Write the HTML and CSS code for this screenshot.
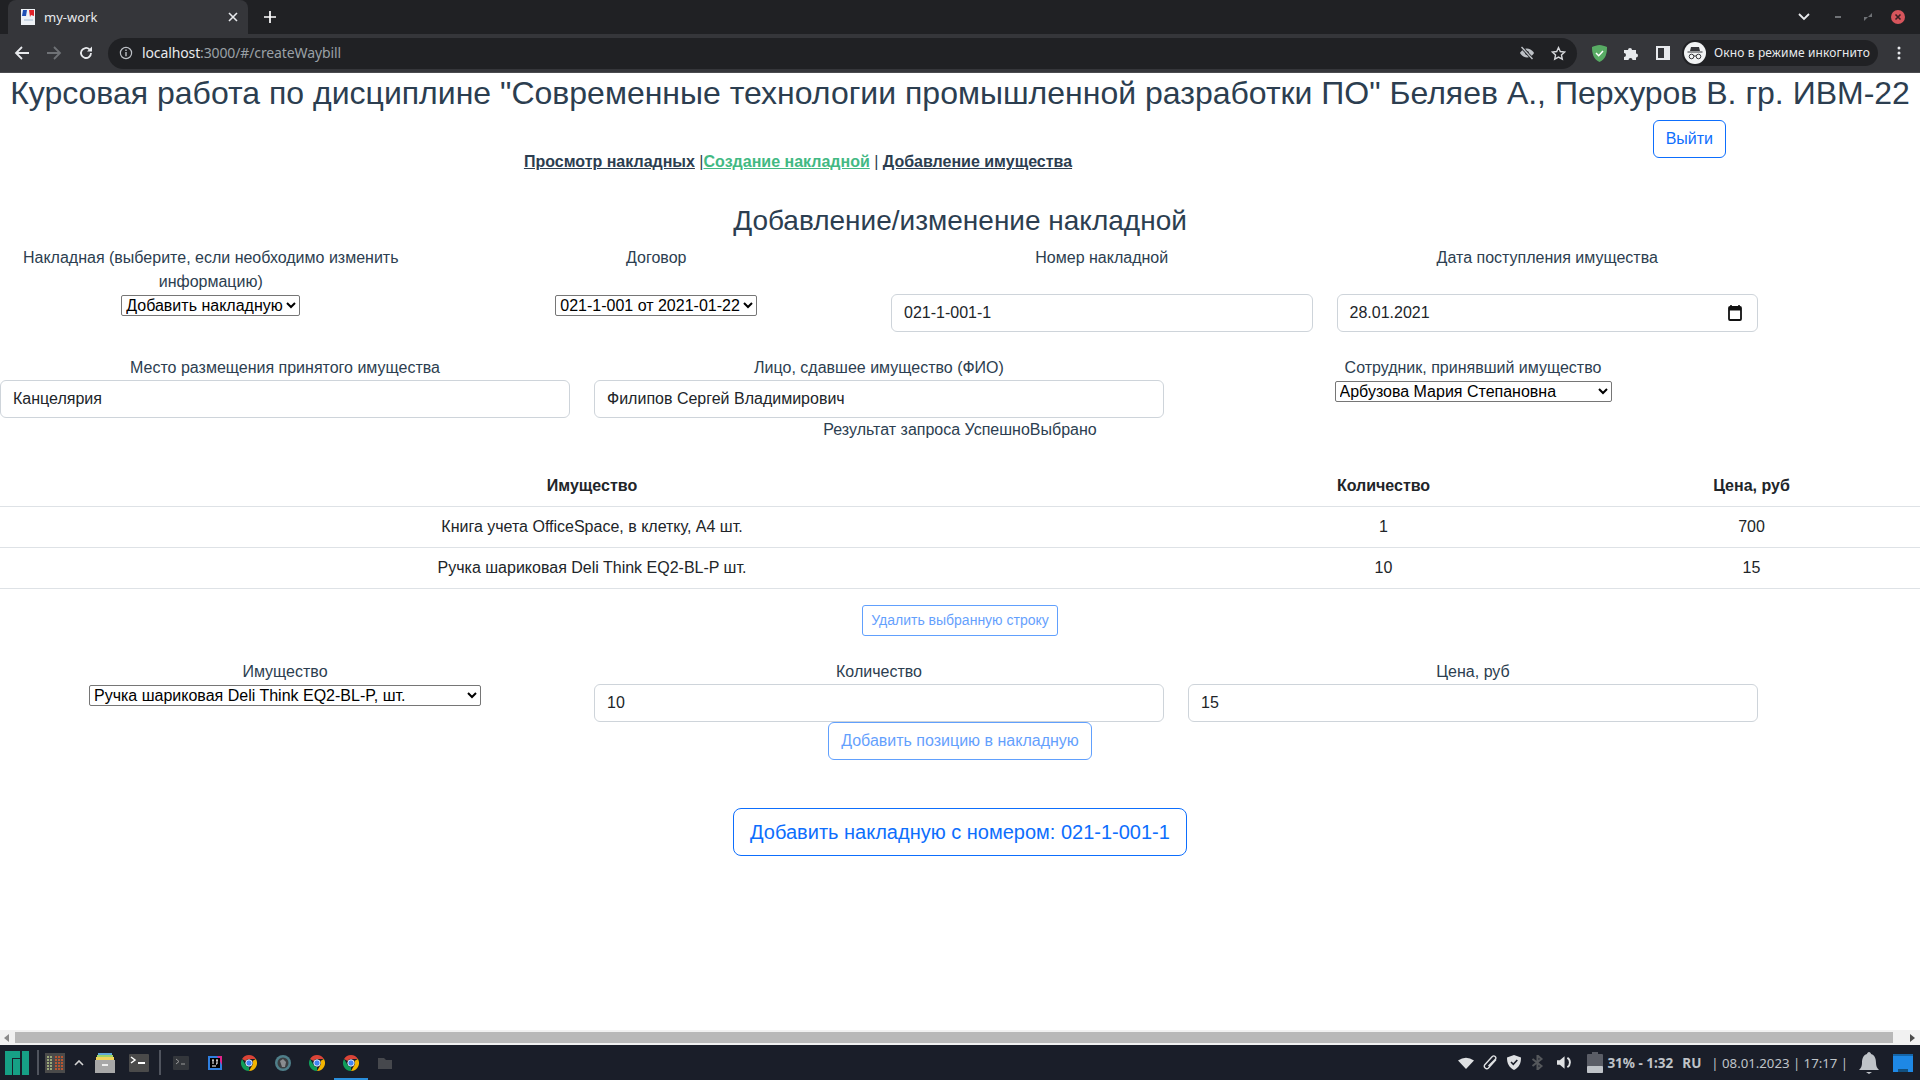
FILE: index.html
```html
<!DOCTYPE html>
<html lang="en">
<head>
    <meta charset="UTF-8">
    <title>my-work</title>
    <link rel="stylesheet" href="styles.css">
</head>
<body>
<div class="tabstrip">
    <div class="tab">
        <svg class="favicon" width="16" height="16" viewBox="0 0 14 16"><rect width="14" height="16" fill="#eef2f6"/><path d="M2 1h4l-1 6H1z" fill="#1f4fb5"/><path d="M8 1h5v6l-3-1-1 2z" fill="#e2232a"/><path d="M3 10h9v2H3z" fill="#c9d6e4"/></svg>
        <span class="tab-title">my-work</span>
        <svg class="tab-close" width="10" height="10" viewBox="0 0 10 10"><path d="M1 1l8 8M9 1l-8 8" stroke="#e8eaed" stroke-width="1.6"/></svg>
    </div>
    <svg class="tab-new" width="12" height="12" viewBox="0 0 14 14"><path d="M7 0v14M0 7h14" stroke="#fff" stroke-width="2"/></svg>
    <div class="win-controls">
        <svg width="12" height="8" viewBox="0 0 12 8"><path d="M1 1l5 5 5-5" fill="none" stroke="#e8eaed" stroke-width="1.8"/></svg>
        <svg class="win-min" width="6" height="2" viewBox="0 0 6 2"><rect width="6" height="2" fill="#6f7276"/></svg>
        <svg class="win-max" width="10" height="10" viewBox="0 0 10 10"><path d="M5 5l4-4v4zM5 5L1 9V5z" fill="#6f7276"/></svg>
        <svg class="win-close" width="14" height="14" viewBox="0 0 14 14"><circle cx="7" cy="7" r="7" fill="#d6555c"/><path d="M4.5 4.5l5 5M9.5 4.5l-5 5" stroke="#3a2024" stroke-width="1.6"/></svg>
    </div>
</div>
<div class="toolbar">
    <svg width="16" height="16" viewBox="0 0 16 16"><path d="M15 8H2M8 2L2 8l6 6" fill="none" stroke="#e8eaed" stroke-width="1.8"/></svg>
    <svg class="nav-fwd" width="16" height="16" viewBox="0 0 16 16"><path d="M1 8h13M8 2l6 6-6 6" fill="none" stroke="#6f7276" stroke-width="1.8"/></svg>
    <svg class="nav-reload" width="16" height="16" viewBox="0 0 16 16"><path d="M13 8a5 5 0 1 1-1.5-3.6" fill="none" stroke="#e8eaed" stroke-width="1.8"/><path d="M14 1.5v5h-5z" fill="#e8eaed"/></svg>
    <div class="omnibox">
        <svg width="14" height="14" viewBox="0 0 14 14"><circle cx="7" cy="7" r="5.6" fill="none" stroke="#bdc1c6" stroke-width="1.2"/><path d="M7 6v4.2M7 3.6v1.4" stroke="#bdc1c6" stroke-width="1.4"/></svg>
        <span class="url"><span class="url-host">localhost</span>:3000/#/createWaybill</span>
        <span class="omni-right">
            <svg width="16" height="14" viewBox="0 0 16 14"><path d="M1 7s2.500-4.500 7-4.500S15 7 15 7s-2.500 4.500-7 4.500S1 7 1 7z" fill="#bdc1c6"/><circle cx="8" cy="7" r="2" fill="#35363a"/><path d="M2.500 1l11 12" stroke="#202124" stroke-width="3"/><path d="M2.500 1l11 12" stroke="#bdc1c6" stroke-width="1.400"/></svg>
            <svg width="15" height="15" viewBox="0 0 24 24"><path d="M12 2.500l2.900 6.300 6.900.8-5.100 4.700 1.400 6.800-6.100-3.400-6.100 3.400 1.400-6.800L2.200 9.600l6.900-.8z" fill="none" stroke="#d5d7da" stroke-width="2.200"/></svg>
        </span>
    </div>
    <svg class="ext-shield" width="15" height="17" viewBox="0 0 15 17"><path d="M7.500 0C5 0 2.500 1 0 2c0 6 1 12 7.500 15C14 14 15 8 15 2 12.500 1 10 0 7.500 0z" fill="#58ab64"/><path d="M4 8l2.700 2.700L11 6" fill="none" stroke="#fff" stroke-width="1.500"/></svg>
    <svg class="ext-puzzle" width="16" height="16" viewBox="0 0 16 16"><path d="M1 5h4a2 2 0 1 1 4 0h4v3.500a2 2 0 1 1 0 4V15H9.500a2 2 0 1 0-4 0H1v-3a2 2 0 1 0 0-4z" fill="#e8eaed"/></svg>
    <svg class="ext-panel" width="14" height="14" viewBox="0 0 14 14"><rect width="14" height="14" fill="#e8eaed"/><rect x="2" y="2" width="6" height="10" fill="#35363a"/></svg>
    <div class="incognito">
        <svg width="22" height="22" viewBox="0 0 22 22"><circle cx="11" cy="11" r="11" fill="#f1f3f4"/><path d="M7 5h8l1 4H6zM3.500 9.500h15v1h-15z" fill="#35363a"/><circle cx="7.500" cy="14.500" r="2.300" fill="none" stroke="#35363a"/><circle cx="14.500" cy="14.500" r="2.300" fill="none" stroke="#35363a"/><path d="M9.800 14h2.400" stroke="#35363a"/></svg>
        <span>Окно в режиме инкогнито</span>
    </div>
    <svg class="menu-dots" width="4" height="14" viewBox="0 0 4 14"><circle cx="2" cy="2" r="1.500" fill="#e8eaed"/><circle cx="2" cy="7" r="1.500" fill="#e8eaed"/><circle cx="2" cy="12" r="1.500" fill="#e8eaed"/></svg>
</div>

<div class="page">
    <h2 class="course-title">Курсовая работа по дисциплине "Современные технологии промышленной разработки ПО" Беляев А., Перхуров В. гр. ИВМ-22</h2>
    <div class="top-actions">
        <button class="btn btn-logout">Выйти</button>
    </div>
    <nav class="links">
        <a href="#">Просмотр накладных</a> |<a href="#" class="current">Создание накладной</a> | <a href="#">Добавление имущества</a>
    </nav>
    <h3 class="form-title">Добавление/изменение накладной</h3>

    <div class="row row-4">
        <div class="col">
            <label>Накладная (выберите, если необходимо изменить информацию)</label>
            <select class="native"><option>Добавить накладную</option></select>
        </div>
        <div class="col col-down">
            <label>Договор</label>
            <select class="native"><option>021-1-001 от 2021-01-22</option></select>
        </div>
        <div class="col col-down">
            <label>Номер накладной</label>
            <input class="field" type="text" value="021-1-001-1">
        </div>
        <div class="col col-down">
            <label>Дата поступления имущества</label>
            <div class="field date-field">
                <span>28.01.2021</span>
                <svg width="14" height="16" viewBox="0 0 14 16"><path d="M3 0v3M11 0v3" stroke="#111" stroke-width="1.600"/><rect x="1" y="2" width="12" height="13" rx="1" fill="none" stroke="#111" stroke-width="1.800"/><rect x="1" y="2" width="12" height="3.500" fill="#111"/></svg>
            </div>
        </div>
    </div>

    <div class="row row-3 row-place">
        <div class="col">
            <label>Место размещения принятого имущества</label>
            <input class="field" type="text" value="Канцелярия">
        </div>
        <div class="col">
            <label>Лицо, сдавшее имущество (ФИО)</label>
            <input class="field" type="text" value="Филипов Сергей Владимирович">
        </div>
        <div class="col">
            <label>Сотрудник, принявший имущество</label>
            <select class="native native-wide"><option>Арбузова Мария Степановна</option></select>
        </div>
    </div>

    <div class="status">Результат запроса УспешноВыбрано</div>

    <table class="items">
        <thead>
            <tr><th class="c-name">Имущество</th><th class="c-qty">Количество</th><th class="c-price">Цена, руб</th></tr>
        </thead>
        <tbody>
            <tr><td>Книга учета OfficeSpace, в клетку, А4 шт.</td><td>1</td><td>700</td></tr>
            <tr><td>Ручка шариковая Deli Think EQ2-BL-P шт.</td><td>10</td><td>15</td></tr>
        </tbody>
    </table>

    <div class="center center-del">
        <button class="btn btn-sm" disabled>Удалить выбранную строку</button>
    </div>

    <div class="row row-3 row-add">
        <div class="col">
            <label>Имущество</label>
            <select class="native native-item"><option>Ручка шариковая Deli Think EQ2-BL-P, шт.</option></select>
        </div>
        <div class="col">
            <label>Количество</label>
            <input class="field" type="text" value="10">
        </div>
        <div class="col">
            <label>Цена, руб</label>
            <input class="field" type="text" value="15">
        </div>
    </div>

    <div class="center">
        <button class="btn" disabled>Добавить позицию в накладную</button>
    </div>
    <div class="center center-submit">
        <button class="btn btn-lg">Добавить накладную с номером: 021-1-001-1</button>
    </div>
</div>

<div class="hscroll">
    <svg width="6" height="8" viewBox="0 0 6 8"><path d="M5 0v8L0 4z" fill="#8a8a8a"/></svg>
    <div class="hscroll-thumb"></div>
    <svg width="6" height="8" viewBox="0 0 6 8"><path d="M1 0v8l5-4z" fill="#4a4a4a"/></svg>
</div>

<div class="taskbar">
    <svg class="manjaro" width="24" height="24" viewBox="0 0 24 24"><path d="M0 0h15v7H7v17H0zM8 8h7v16H8zM17 0h7v24h-7z" fill="#16a085"/></svg>
    <span class="sep"></span>
    <svg width="20" height="20" viewBox="0 0 20 20"><rect width="20" height="20" fill="#4a4a4a"/><path d="M2 4h5M2 7h5M2 10h5M2 13h5M2 16h5" stroke="#b7c98a" stroke-width="1.500" stroke-dasharray="2 1"/><path d="M10 4h8M10 7h8M10 10h8M10 13h8M10 16h8" stroke="#e0592a" stroke-width="1.500" stroke-dasharray="2 1"/></svg>
    <svg class="chev" width="10" height="6" viewBox="0 0 10 6"><path d="M1 5l4-4 4 4" fill="none" stroke="#d4d4d4" stroke-width="1.600"/></svg>
    <svg class="ti-files" width="20" height="20" viewBox="0 0 20 20"><rect x="3" y="0" width="14" height="4" fill="#5fa8d8"/><rect x="2" y="2" width="16" height="4" fill="#9bd36a"/><rect x="1" y="4" width="18" height="3" fill="#f0d35c"/><rect y="7" width="20" height="13" fill="#a8a8a8"/><rect x="7" y="11" width="6" height="2" fill="#eee"/></svg>
    <svg class="ti-term" width="20" height="18" viewBox="0 0 20 18"><rect width="20" height="18" rx="1" fill="#4a4a4a"/><path d="M2 3l4 3-4 3" fill="none" stroke="#fff" stroke-width="1.500"/><path d="M9 9h7" stroke="#fff" stroke-width="2"/></svg>
    <span class="sep sep-2"></span>
    <svg class="ti-term2" width="16" height="14" viewBox="0 0 16 14"><rect width="16" height="14" rx="1" fill="#33363b"/><path d="M3 3l3 2.500L3 8" fill="none" stroke="#9a9a9a"/><path d="M8 8h4" stroke="#9a9a9a"/></svg>
    <svg class="ti-idea" width="14" height="14" viewBox="0 0 14 14"><rect width="14" height="14" fill="#2f7fe0"/><path d="M14 0v9L9 0z" fill="#e0248a"/><rect x="2" y="2" width="10" height="10" fill="#000"/><path d="M4 4h2M5 4v4M8 4h2M9 4v4H8M4 10h4" stroke="#fff"/></svg>
    <svg class="ti-chrome" width="16" height="16" viewBox="0 0 16 16"><use href="#chrome-ico"/></svg>
    <svg class="ti-gimp" width="16" height="16" viewBox="0 0 16 16"><circle cx="8" cy="8" r="8" fill="#4f7f8a"/><circle cx="8" cy="8" r="5.500" fill="#3c3f42"/><path d="M5 6l3-2 3 3-1 5H7z" fill="#8a8d90"/></svg>
    <svg class="ti-gimp" width="16" height="16" viewBox="0 0 16 16"><use href="#chrome-ico"/></svg>
    <span class="ti-active"><svg width="16" height="16" viewBox="0 0 16 16"><use href="#chrome-ico"/></svg></span>
    <svg class="ti-folder" width="14" height="12" viewBox="0 0 14 12"><path d="M0 1h6l2 2h6v9H0z" fill="#46484d"/></svg>

    <div class="tray">
        <svg width="16" height="12" viewBox="0 0 16 12"><path d="M0 3.500Q8-2 16 3.500L8 12z" fill="#dfe1e3"/></svg>
        <svg class="tr-clip" width="14" height="15" viewBox="0 0 14 15"><path d="M13 4.500L5.500 13a2.500 2.500 0 0 1-3.700-3.300L9.300 1.500a2.100 2.100 0 0 1 3.100 2.800L5.500 11" fill="none" stroke="#dfe1e3" stroke-width="1.400"/></svg>
        <svg class="tr-shield" width="14" height="15" viewBox="0 0 14 15"><path d="M7 0l7 2.500c0 6-2 10-7 12.500C2 12.500 0 8.500 0 2.500z" fill="#dfe1e3"/><path d="M4 7l2.300 2.300L10.300 5" fill="none" stroke="#1a1e29" stroke-width="1.600"/></svg>
        <svg class="tr-bt" width="13" height="15" viewBox="0 0 12 15"><path d="M1 4l9 7-4 3.500v-14l4 3.500-9 7" fill="none" stroke="#55585c" stroke-width="2"/></svg>
        <svg class="tr-vol" width="17" height="15" viewBox="0 0 18 15"><path d="M0 5h3l5-4v13l-5-4H0z" fill="#dfe1e3"/><path d="M11 2.500a6 6 0 0 1 0 10" fill="none" stroke="#dfe1e3" stroke-width="2"/></svg>
        <svg class="battery" width="16" height="21" viewBox="0 0 16 21"><rect x="5" y="0" width="6" height="2" fill="#5a5d66"/><rect y="2" width="16" height="19" rx="1" fill="#5a5d66"/><rect y="14" width="16" height="7" rx="1" fill="#bfc3c8"/></svg>
        <span class="tray-bold tray-batt">31% - 1:32</span>
        <span class="tray-bold tray-lang">RU</span>
        <span class="tray-text">| 08.01.2023 | 17:17 |</span>
        <svg class="bell" width="22" height="22" viewBox="0 0 20 22"><path d="M10 0c1 0 2 1 2 2 4 1 5 5 5 9 0 3 1 5 3 7H0c2-2 3-4 3-7 0-4 1-8 5-9 0-1 1-2 2-2z" fill="#bfc3c8"/><path d="M7 20h6l-3 2z" fill="#bfc3c8"/></svg>
        <svg class="desk" width="20" height="18" viewBox="0 0 20 18"><rect width="20" height="18" fill="#1e88e5"/><rect width="20" height="2" fill="#1565a8"/><rect x="5" y="15" width="10" height="3" fill="#12507f"/></svg>
    </div>
</div>

<svg width="0" height="0" class="defs">
    <defs>
        <g id="chrome-ico">
            <path d="M8 0a8 8 0 0 1 6.930 4H8a4 4 0 0 0-3.460 2L1.070 4A8 8 0 0 1 8 0z" fill="#db4437"/>
            <path d="M14.930 4A8 8 0 0 1 8 16l3.460-6A4 4 0 0 0 11.460 6z" fill="#f4b400"/>
            <path d="M8 16A8 8 0 0 1 1.070 4l3.470 6A4 4 0 0 0 8 12z" fill="#0f9d58"/>
            <circle cx="8" cy="8" r="3.200" fill="#4285f4" stroke="#fff" stroke-width="0.900"/>
        </g>
    </defs>
</svg>
</body>
</html>
```

FILE: styles.css
```css
*{
    box-sizing: border-box;
}
html,body{
    margin: 0;
    padding: 0;
    height: 100%;
    overflow: hidden;
    background: #fff;
}
body{
    width: 1920px;
    height: 1080px;
    display: flex;
    flex-direction: column;
    font-family: "Liberation Sans", Arial, sans-serif;
    font-size: 16px;
    line-height: 24px;
    color: #2c3e50;
}
.defs{
    position: absolute;
}

/* browser */
.tabstrip{
    height: 34px;
    flex: none;
    background: #202124;
    display: flex;
    align-items: center;
    padding-left: 8px;
    font-family: "Noto Sans", sans-serif;
}
.tab{
    width: 240px;
    height: 34px;
    background: #35363a;
    border-radius: 8px 8px 0 0;
    display: flex;
    align-items: center;
    padding: 0 10px 0 12px;
    color: #e8eaed;
    font-size: 13px;
}
.tab-title{
    margin-left: 8px;
    flex: 1;
}
.tab-new{
    margin-left: 16px;
}
.win-controls{
    margin-left: auto;
    display: flex;
    align-items: center;
    padding-right: 15px;
}
.win-min{
    margin-left: 25px;
}
.win-max{
    margin-left: 22px;
}
.win-close{
    margin-left: 18px;
}
.toolbar{
    height: 39px;
    flex: none;
    background: #35363a;
    display: flex;
    align-items: center;
    padding-left: 14px;
    border-bottom: 1px solid #4a4b4f;
    font-family: "Noto Sans", sans-serif;
}
.nav-fwd{
    margin-left: 16px;
}
.nav-reload{
    margin-left: 16px;
}
.omnibox{
    width: 1469px;
    height: 31px;
    margin-left: 14px;
    background: #202124;
    border-radius: 16px;
    display: flex;
    align-items: center;
    padding: 0 11px;
}
.url{
    margin-left: 9px;
    font-size: 14px;
    letter-spacing: -.12px;
    color: #9aa0a6;
}
.url-host{
    color: #e8eaed;
}
.omni-right{
    margin-left: auto;
    display: flex;
    align-items: center;
    gap: 16px;
}
.ext-shield{
    margin-left: 15px;
}
.ext-puzzle{
    margin-left: 16px;
}
.ext-panel{
    margin-left: 17px;
}
.incognito{
    width: 196px;
    height: 26px;
    margin-left: 12px;
    border-radius: 13px;
    background: #202124;
    display: flex;
    align-items: center;
    padding-left: 2px;
    color: #e8eaed;
    font-size: 12px;
    letter-spacing: .13px;
    white-space: nowrap;
}
.incognito span{
    margin-left: 8px;
}
.menu-dots{
    margin-left: 19px;
}

/* page */
.page{
    flex: 1;
    min-height: 0;
    overflow: hidden;
}
.course-title{
    margin: 0;
    font-size: 32px;
    font-weight: 400;
    line-height: 38px;
    text-align: center;
    white-space: nowrap;
    padding-top: 1px;
}
.top-actions{
    display: flex;
    justify-content: flex-end;
    padding-right: 194px;
    margin-top: 8px;
}
.btn{
    font: inherit;
    color: #0d6efd;
    background: #fff;
    border: 1px solid #0d6efd;
    border-radius: 6px;
    padding: 6px 12px;
    line-height: 24px;
}
.btn[disabled]{
    opacity: .65;
}
.links{
    text-align: center;
    margin-top: -8px;
    padding-right: 324px;
}
.links a{
    color: #2c3e50;
    font-weight: 700;
}
.links a.current{
    color: #42b983;
}
.form-title{
    margin: 30px 0 0;
    font-size: 28px;
    font-weight: 400;
    line-height: 34px;
    text-align: center;
}
.row{
    width: 1782px;
    margin-left: -12px;
    display: grid;
}
.row-4{
    grid-template-columns: repeat(4, 1fr);
    margin-top: 8px;
}
.row-3{
    grid-template-columns: repeat(3, 1fr);
}
.col{
    padding: 0 12px;
    text-align: center;
    min-width: 0;
}
.col label{
    display: block;
    line-height: 24px;
}
.col-down .field{
    margin-top: 24px;
}
.native{
    font-family: "Liberation Sans", Arial, sans-serif;
    font-size: 16px;
    height: 21px;
    margin-top: 1px;
    color: #000;
    background: #fff;
    border: 1px solid #767676;
    border-radius: 2px;
    vertical-align: top;
}
.col-down .native{
    margin-top: 25px;
}
.native-wide{
    width: 277px;
}
.native-item{
    width: 392px;
}
.field{
    display: block;
    width: 100%;
    height: 38px;
    padding: 6px 12px;
    font: inherit;
    color: #212529;
    background: #fff;
    border: 1px solid #ced4da;
    border-radius: 6px;
    text-align: left;
}
.date-field{
    display: flex;
    align-items: center;
    justify-content: space-between;
    padding-right: 15px;
}
.row-place{
    margin-top: 24px;
}
.status{
    text-align: center;
}
.items{
    width: 100%;
    border-collapse: collapse;
    margin-top: 24px;
    text-align: center;
    color: #212529;
}
.items th,
.items td{
    padding: 8px;
    line-height: 24px;
    border-bottom: 1px solid #dee2e6;
}
.c-name{
    width: 1184px;
}
.c-qty{
    width: 399px;
}
.center{
    display: flex;
    justify-content: center;
}
.center-del{
    margin-top: 16px;
}
.btn-sm{
    font-size: 14px;
    line-height: 21px;
    padding: 4px 8px;
    border-radius: 3px;
}
.row-add{
    margin-top: 24px;
}
.btn-lg{
    font-size: 20px;
    line-height: 30px;
    padding: 8px 16px;
    border-radius: 8px;
}
.center-submit{
    margin-top: 48px;
}

/* scrollbar + desktop panel */
.hscroll{
    height: 15px;
    flex: none;
    background: #f1f1f1;
    display: flex;
    align-items: center;
    padding: 0 5px 0 4px;
}
.hscroll-thumb{
    flex: 1;
    height: 11px;
    margin: 0 16px 0 5px;
    background: #b8b8b8;
}
.taskbar{
    height: 35px;
    flex: none;
    background: #1a1e29;
    display: flex;
    align-items: center;
    padding-left: 5px;
    color: #bfc3c8;
    font-family: "Noto Sans", sans-serif;
}
.sep{
    width: 2px;
    height: 25px;
    margin-left: 8px;
    background: #50545e;
}
.taskbar svg{
    flex: none;
}
.sep + svg{
    margin-left: 6px;
}
.chev{
    margin-left: 9px;
}
.ti-files{
    margin-left: 11px;
}
.ti-term{
    margin-left: 14px;
}
.sep-2{
    margin-left: 10px;
}
.sep-2 + svg{
    margin-left: 12px;
}
.ti-idea{
    margin-left: 19px;
}
.ti-chrome{
    margin-left: 19px;
}
.ti-gimp{
    margin-left: 18px;
}
.ti-active{
    width: 34px;
    height: 35px;
    margin-left: 9px;
    display: flex;
    align-items: center;
    justify-content: center;
    border-bottom: 2px solid #2a8fdc;
    padding-top: 2px;
}
.ti-folder{
    margin-left: 10px;
}
.tray{
    margin-left: auto;
    display: flex;
    align-items: center;
    white-space: nowrap;
}
.tr-clip{
    margin-left: 9px;
}
.tr-shield{
    margin-left: 10px;
}
.tr-bt{
    margin-left: 10px;
}
.tr-vol{
    margin-left: 13px;
}
.battery{
    margin-left: 13px;
}
.tray-bold{
    font-size: 13.5px;
    font-weight: 700;
}
.tray-batt{
    margin-left: 4px;
}
.tray-lang{
    margin-left: 9px;
}
.tray-text{
    font-size: 13.2px;
    margin-left: 10px;
}
.bell{
    margin-left: 10px;
}
.desk{
    margin-left: 13px;
    margin-right: 7px;
}
```
